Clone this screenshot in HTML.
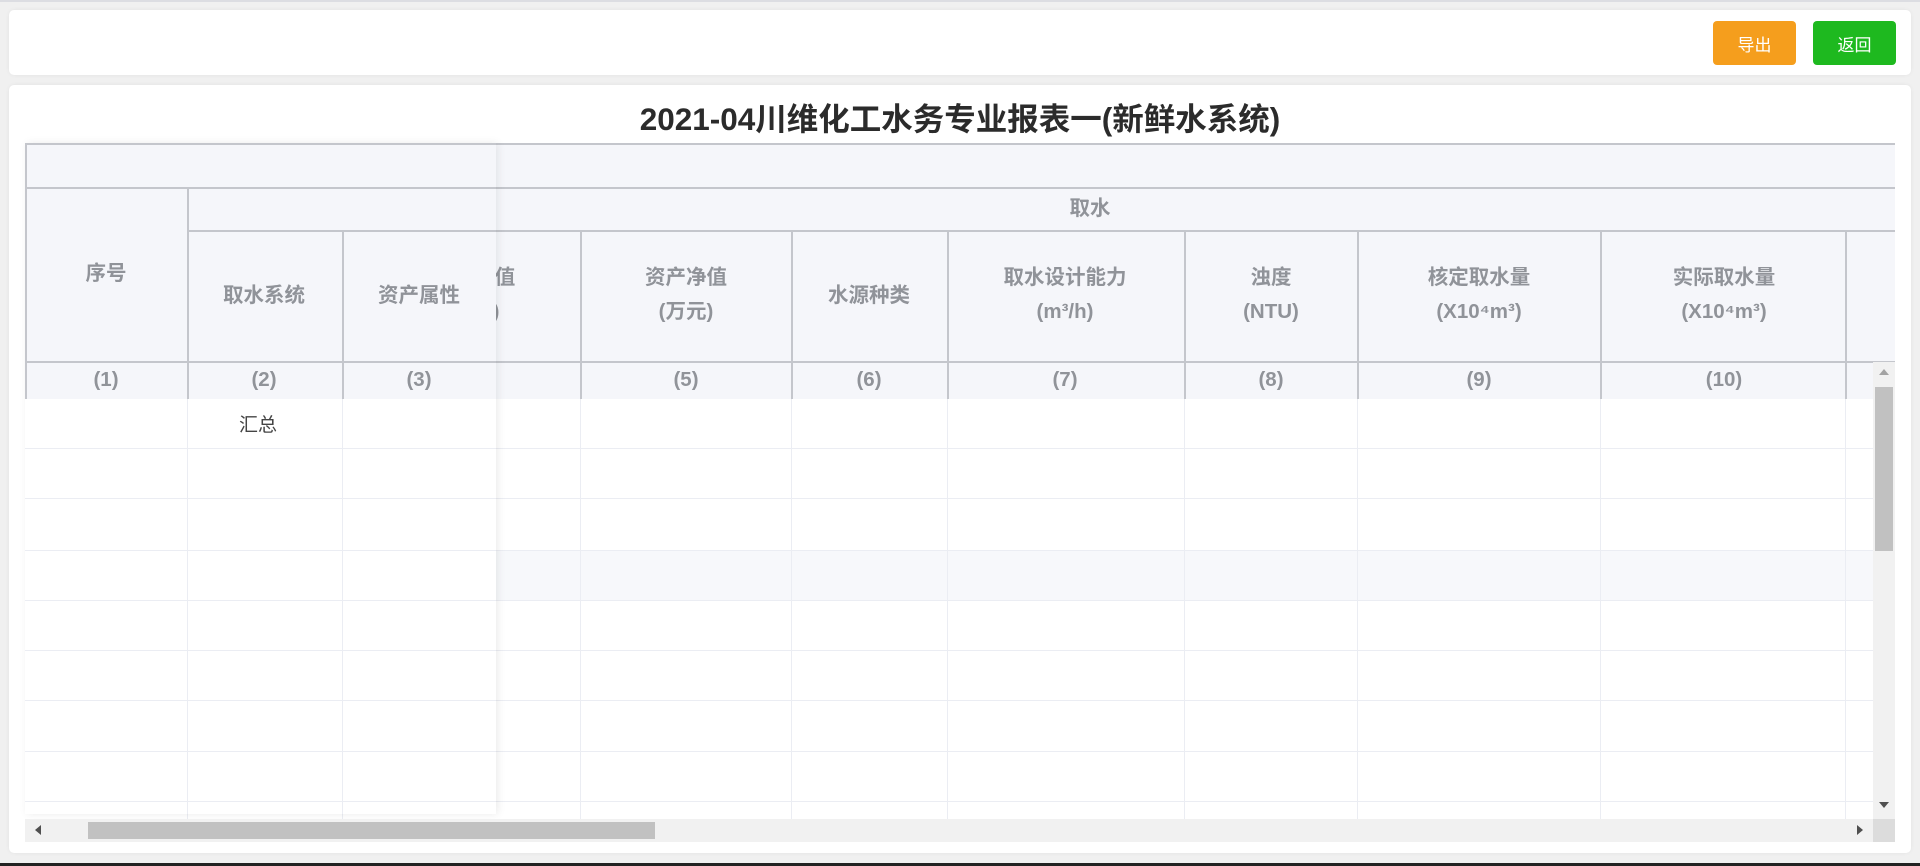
<!DOCTYPE html>
<html><head><meta charset="utf-8"><style>
*{margin:0;padding:0;box-sizing:border-box}
body{width:1920px;height:866px;background:#f0f0f0;position:relative;overflow:hidden;font-family:"Liberation Sans","Noto Sans CJK SC",sans-serif}
.abs{position:absolute}
.card{position:absolute;background:#fff;border-radius:5px;box-shadow:0 0 4px rgba(0,0,0,.06)}
.btn{position:absolute;top:21px;height:44px;width:83px;border-radius:4px;color:#fff;font-size:17px;display:flex;align-items:center;justify-content:center}
.h{position:absolute;background:#c4c6cc;height:2px}
.v{position:absolute;background:#c4c6cc;width:2px}
.bh{position:absolute;background:#ebedf3;height:1px}
.bv{position:absolute;background:#ebedf3;width:1px}
.t{position:absolute;color:#909399;font-weight:bold;font-size:20.5px;text-align:center;transform:translateX(-50%);white-space:nowrap;line-height:42px}
</style></head><body>
<div class="abs" style="left:0;top:0;width:1920px;height:2px;background:#dcdde2"></div>
<div class="card" style="left:9px;top:10px;width:1902px;height:65px"></div>
<div class="btn" style="left:1713px;background:#f59e1d">导出</div>
<div class="btn" style="left:1813px;background:#1eb91f">返回</div>
<div class="card" style="left:9px;top:85px;width:1902px;height:768px"></div>
<div class="abs" style="left:0;top:99px;width:1920px;text-align:center;font-size:31.5px;font-weight:bold;color:#2b2b2b;line-height:40px">2021-04川维化工水务专业报表一(新鲜水系统)</div>

<div class="abs" style="left:25px;top:143px;width:1870px;height:256px;background:#f5f6fa"></div>
<div class="abs" style="left:496px;top:550px;width:1377px;height:50px;background:#f7f8fb"></div>
<div class="h" style="left:25px;top:143px;width:1870px"></div>
<div class="h" style="left:25px;top:187px;width:1870px"></div>
<div class="h" style="left:187px;top:230px;width:1708px"></div>
<div class="h" style="left:25px;top:361px;width:1870px"></div>
<div class="v" style="left:25px;top:143px;height:256px"></div>
<div class="v" style="left:187px;top:187px;height:212px"></div>
<div class="v" style="left:342px;top:230px;height:169px"></div>
<div class="v" style="left:580px;top:230px;height:169px"></div>
<div class="v" style="left:791px;top:230px;height:169px"></div>
<div class="v" style="left:947px;top:230px;height:169px"></div>
<div class="v" style="left:1184px;top:230px;height:169px"></div>
<div class="v" style="left:1357px;top:230px;height:169px"></div>
<div class="v" style="left:1600px;top:230px;height:169px"></div>
<div class="v" style="left:1845px;top:230px;height:169px"></div>
<div class="bh" style="left:25px;top:448px;width:1848px"></div>
<div class="bh" style="left:25px;top:498px;width:1848px"></div>
<div class="bh" style="left:25px;top:550px;width:1848px"></div>
<div class="bh" style="left:25px;top:600px;width:1848px"></div>
<div class="bh" style="left:25px;top:650px;width:1848px"></div>
<div class="bh" style="left:25px;top:700px;width:1848px"></div>
<div class="bh" style="left:25px;top:751px;width:1848px"></div>
<div class="bh" style="left:25px;top:801px;width:1848px"></div>
<div class="bv" style="left:187px;top:399px;height:420px"></div>
<div class="bv" style="left:342px;top:399px;height:420px"></div>
<div class="bv" style="left:580px;top:399px;height:420px"></div>
<div class="bv" style="left:791px;top:399px;height:420px"></div>
<div class="bv" style="left:947px;top:399px;height:420px"></div>
<div class="bv" style="left:1184px;top:399px;height:420px"></div>
<div class="bv" style="left:1357px;top:399px;height:420px"></div>
<div class="bv" style="left:1600px;top:399px;height:420px"></div>
<div class="bv" style="left:1845px;top:399px;height:420px"></div>

<div class="t" style="left:1090px;top:188px">取水</div>
<div class="t" style="left:505px;top:257px">值</div>
<div class="t" style="left:496px;top:291px">)</div>
<div class="t" style="left:686px;top:257px">资产净值</div>
<div class="t" style="left:686px;top:291px">(万元)</div>
<div class="t" style="left:869px;top:275px">水源种类</div>
<div class="t" style="left:1065px;top:257px">取水设计能力</div>
<div class="t" style="left:1065px;top:291px">(m³/h)</div>
<div class="t" style="left:1271px;top:257px">浊度</div>
<div class="t" style="left:1271px;top:291px">(NTU)</div>
<div class="t" style="left:1479px;top:257px">核定取水量</div>
<div class="t" style="left:1479px;top:291px">(X10⁴m³)</div>
<div class="t" style="left:1724px;top:257px">实际取水量</div>
<div class="t" style="left:1724px;top:291px">(X10⁴m³)</div>
<div class="t" style="left:686px;top:359px">(5)</div>
<div class="t" style="left:869px;top:359px">(6)</div>
<div class="t" style="left:1065px;top:359px">(7)</div>
<div class="t" style="left:1271px;top:359px">(8)</div>
<div class="t" style="left:1479px;top:359px">(9)</div>
<div class="t" style="left:1724px;top:359px">(10)</div>

<div class="abs" style="left:25px;top:143px;width:471px;height:671px;background:#fff;box-shadow:2px 0 8px rgba(0,0,0,.08);overflow:hidden">
 <div class="abs" style="left:0;top:0;width:471px;height:256px;background:#f5f6fa"></div>
 <div class="h" style="left:0;top:0;width:471px"></div>
 <div class="h" style="left:0;top:44px;width:471px"></div>
 <div class="h" style="left:162px;top:87px;width:309px"></div>
 <div class="h" style="left:0;top:218px;width:471px"></div>
 <div class="v" style="left:0;top:0;height:256px"></div>
 <div class="v" style="left:162px;top:44px;height:212px"></div>
 <div class="v" style="left:317px;top:87px;height:169px"></div>
 <div class="bh" style="left:0;top:305px;width:471px"></div>
 <div class="bh" style="left:0;top:355px;width:471px"></div>
 <div class="bh" style="left:0;top:407px;width:471px"></div>
 <div class="bh" style="left:0;top:457px;width:471px"></div>
 <div class="bh" style="left:0;top:507px;width:471px"></div>
 <div class="bh" style="left:0;top:557px;width:471px"></div>
 <div class="bh" style="left:0;top:608px;width:471px"></div>
 <div class="bh" style="left:0;top:658px;width:471px"></div>
 <div class="bv" style="left:162px;top:256px;height:420px"></div>
 <div class="bv" style="left:317px;top:256px;height:420px"></div>
 <div class="t" style="left:81px;top:110px">序号</div>
 <div class="t" style="left:239px;top:132px">取水系统</div>
 <div class="t" style="left:394px;top:132px">资产属性</div>
 <div class="t" style="left:81px;top:216px">(1)</div>
 <div class="t" style="left:239px;top:216px">(2)</div>
 <div class="t" style="left:394px;top:216px">(3)</div>
 <div class="abs" style="left:214px;top:268px;font-size:19px;color:#444;line-height:30px">汇总</div>
</div>

<div class="abs" style="left:1873px;top:362px;width:22px;height:457px;background:#f1f1f1"></div>
<div class="abs" style="left:1875px;top:387px;width:18px;height:164px;background:#c1c1c1"></div>
<div class="abs" style="left:1879px;top:369px;width:0;height:0;border-left:5px solid transparent;border-right:5px solid transparent;border-bottom:6px solid #a3a3a3"></div>
<div class="abs" style="left:1879px;top:802px;width:0;height:0;border-left:5px solid transparent;border-right:5px solid transparent;border-top:6px solid #505050"></div>
<div class="abs" style="left:25px;top:819px;width:1848px;height:23px;background:#f1f1f1"></div>
<div class="abs" style="left:88px;top:822px;width:567px;height:17px;background:#c1c1c1"></div>
<div class="abs" style="left:35px;top:825px;width:0;height:0;border-top:5px solid transparent;border-bottom:5px solid transparent;border-right:6px solid #505050"></div>
<div class="abs" style="left:1857px;top:825px;width:0;height:0;border-top:5px solid transparent;border-bottom:5px solid transparent;border-left:6px solid #505050"></div>
<div class="abs" style="left:1873px;top:819px;width:22px;height:23px;background:#dcdcdc"></div>
<div class="abs" style="left:0;top:863px;width:1920px;height:3px;background:#222"></div>
</body></html>
